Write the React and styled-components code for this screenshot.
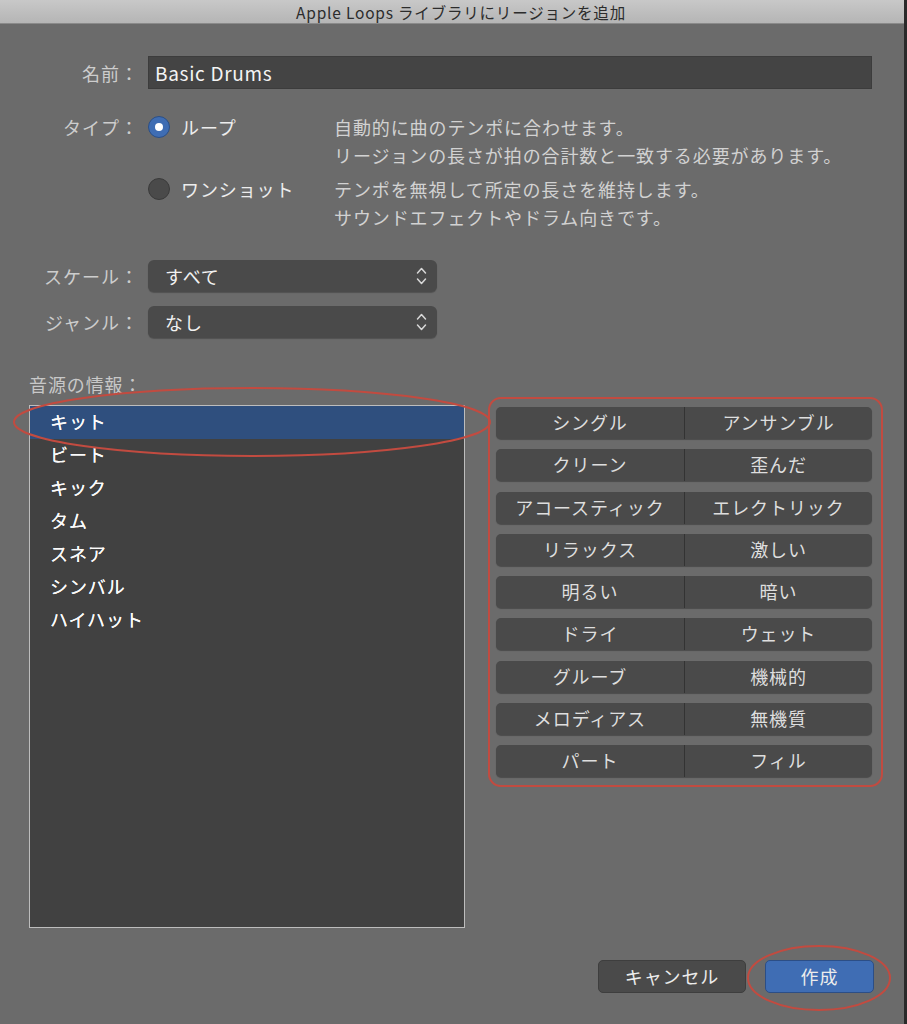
import React from 'react'
import styled, { createGlobalStyle } from 'styled-components'

const GlobalStyle = createGlobalStyle`
  html, body {
    margin: 0;
    padding: 0;
    background: #6b6b6b;
  }
  body {
    font-family: "Noto Sans CJK JP", "Noto Sans", sans-serif;
  }
`

const Window = styled.div`
  position: relative;
  width: 907px;
  height: 1024px;
  box-sizing: border-box;
  border-right: 3px solid #2a2a2a;
  background: #6b6b6b;
  display: flex;
  flex-direction: column;
  overflow: hidden;
`

const TitleBar = styled.div`
  flex: none;
  height: 23px;
  padding-left: 18px;
  background: linear-gradient(#c8c8c8, #b5b5b5);
  border-bottom: 1px solid #8a8a8a;
  display: flex;
  align-items: center;
  justify-content: center;
  font-size: 15.5px;
  letter-spacing: 0.8px;
  color: #2c2c2c;
`

const Content = styled.div`
  padding: 32px 32px 0 29px;
  display: flex;
  flex-direction: column;
  letter-spacing: 0.9px;
`

const FormRow = styled.div`
  display: grid;
  grid-template-columns: 110px 1fr;
  column-gap: 9px;
  align-items: ${p => (p.$top ? 'start' : 'center')};
  margin-top: ${p => p.$mt || 0}px;
`

const Label = styled.div`
  text-align: right;
  font-size: 18px;
  line-height: 28px;
  color: #cdcdcd;
  white-space: nowrap;
  letter-spacing: 1px;
`

const TextInput = styled.div`
  height: 33px;
  background: #444444;
  box-shadow: inset 0 0 0 1px #3c3c3c;
  display: flex;
  align-items: center;
  padding-left: 7px;
  font-size: 19px;
  letter-spacing: 0.7px;
  color: #f4f4f4;
`

const RadioGroup = styled.div`
  display: flex;
  flex-direction: column;
  gap: 6px;
`

const RadioOption = styled.div`
  display: grid;
  grid-template-columns: 22px 142px 1fr;
  column-gap: 11px;
  align-items: start;
`

const RadioDot = styled.div`
  width: 22px;
  height: 22px;
  margin-top: 3px;
  box-sizing: border-box;
  border-radius: 50%;
  background: ${p => (p.$on ? '#3f6db3' : '#4a4a4a')};
  border: 1px solid ${p => (p.$on ? '#2b4f86' : '#3a3a3a')};
  display: flex;
  align-items: center;
  justify-content: center;
  &::after {
    content: '';
    display: ${p => (p.$on ? 'block' : 'none')};
    width: 8px;
    height: 8px;
    border-radius: 50%;
    background: #ffffff;
  }
`

const OptionText = styled.div`
  font-size: 18px;
  line-height: 28px;
  color: #ededed;
  white-space: nowrap;
`

const Description = styled.div`
  font-size: 18px;
  line-height: 28px;
  color: #d2d2d2;
  white-space: nowrap;
`

const Popup = styled.div`
  width: 289px;
  height: 32px;
  box-sizing: border-box;
  border-radius: 6px;
  background: #4a4a4a;
  box-shadow: 0 1px 1px rgba(0, 0, 0, 0.25);
  display: flex;
  align-items: center;
  justify-content: space-between;
  padding: 0 10px 0 17px;
  font-size: 18px;
  color: #f2f2f2;
`

const SectionLabel = styled.div`
  margin-top: 34px;
  font-size: 18px;
  line-height: 24px;
  color: #c8c8c8;
`

const Lower = styled.div`
  margin-top: 9px;
  display: flex;
  gap: 31px;
  align-items: flex-start;
`

const List = styled.div`
  width: 437px;
  height: 523px;
  box-sizing: border-box;
  border: 1.5px solid #bdbdbd;
  background: #414141;
  display: flex;
  flex-direction: column;
`

const ListItem = styled.div`
  height: 33px;
  flex: none;
  box-sizing: border-box;
  padding: 0 0 3px 20px;
  display: flex;
  align-items: center;
  font-size: 18px;
  color: #fafafa;
  text-shadow: 0 0 0.4px #ffffff;
  background: ${p => (p.$selected ? '#2f4f7e' : 'transparent')};
`

const SegmentGrid = styled.div`
  width: 377px;
  padding-top: 2px;
  display: flex;
  flex-direction: column;
  gap: 10.25px;
`

const Segmented = styled.div`
  height: 32px;
  display: grid;
  grid-template-columns: 1fr 1fr;
  border-radius: 5px;
  background: #4a4a4a;
  box-shadow: 0 1px 1px rgba(0, 0, 0, 0.3);
  overflow: hidden;
`

const Segment = styled.div`
  display: flex;
  align-items: center;
  justify-content: center;
  padding-bottom: 2px;
  font-size: 18px;
  color: #dedede;
  & + & {
    border-left: 1px solid #333333;
  }
`

const Footer = styled.div`
  margin-top: 32px;
  display: flex;
  justify-content: flex-end;
  gap: 19px;
  margin-right: -2px;
`

const Button = styled.div`
  width: ${p => p.$w}px;
  height: 33px;
  box-sizing: border-box;
  border-radius: 5px;
  background: ${p => (p.$primary ? '#3f6db4' : '#4a4a4a')};
  border: 1px solid ${p => (p.$primary ? '#2c4e86' : '#3e3e3e')};
  display: flex;
  align-items: center;
  justify-content: center;
  padding-bottom: 2px;
  font-size: 18px;
  color: #ececec;
`

const Annotations = styled.svg`
  position: absolute;
  left: 0;
  top: 0;
  pointer-events: none;
`

const Chevrons = () => (
  <svg width="11" height="20" viewBox="0 0 11 20">
    <polyline points="1.5,7 5.5,2.5 9.5,7" fill="none" stroke="#d8d8d8" strokeWidth="1.5" strokeLinecap="round" strokeLinejoin="round" />
    <polyline points="1.5,13 5.5,17.5 9.5,13" fill="none" stroke="#d8d8d8" strokeWidth="1.5" strokeLinecap="round" strokeLinejoin="round" />
  </svg>
)

const instruments = ['キット', 'ビート', 'キック', 'タム', 'スネア', 'シンバル', 'ハイハット']

const pairs = [
  ['シングル', 'アンサンブル'],
  ['クリーン', '歪んだ'],
  ['アコースティック', 'エレクトリック'],
  ['リラックス', '激しい'],
  ['明るい', '暗い'],
  ['ドライ', 'ウェット'],
  ['グルーブ', '機械的'],
  ['メロディアス', '無機質'],
  ['パート', 'フィル'],
]

export default function App() {
  return (
    <>
      <GlobalStyle />
      <Window>
        <TitleBar>Apple Loops ライブラリにリージョンを追加</TitleBar>
        <Content>
          <FormRow>
            <Label>名前：</Label>
            <TextInput>Basic Drums</TextInput>
          </FormRow>

          <FormRow $top $mt={24}>
            <Label>タイプ：</Label>
            <RadioGroup>
              <RadioOption>
                <RadioDot $on />
                <OptionText>ループ</OptionText>
                <Description>
                  自動的に曲のテンポに合わせます。<br />
                  リージョンの長さが拍の合計数と一致する必要があります。
                </Description>
              </RadioOption>
              <RadioOption>
                <RadioDot />
                <OptionText>ワンショット</OptionText>
                <Description>
                  テンポを無視して所定の長さを維持します。<br />
                  サウンドエフェクトやドラム向きです。
                </Description>
              </RadioOption>
            </RadioGroup>
          </FormRow>

          <FormRow $mt={29}>
            <Label>スケール：</Label>
            <Popup>
              すべて
              <Chevrons />
            </Popup>
          </FormRow>
          <FormRow $mt={14}>
            <Label>ジャンル：</Label>
            <Popup>
              なし
              <Chevrons />
            </Popup>
          </FormRow>

          <SectionLabel>音源の情報：</SectionLabel>
          <Lower>
            <List>
              {instruments.map((name, i) => (
                <ListItem key={name} $selected={i === 0}>{name}</ListItem>
              ))}
            </List>
            <SegmentGrid>
              {pairs.map(([a, b]) => (
                <Segmented key={a}>
                  <Segment>{a}</Segment>
                  <Segment>{b}</Segment>
                </Segmented>
              ))}
            </SegmentGrid>
          </Lower>

          <Footer>
            <Button $w={148}>キャンセル</Button>
            <Button $w={109} $primary>作成</Button>
          </Footer>
        </Content>

        <Annotations width="907" height="1024" viewBox="0 0 907 1024">
          <ellipse cx="252" cy="422" rx="238" ry="34" fill="none" stroke="#c24b40" strokeWidth="2" />
          <rect x="489" y="398" width="393" height="388" rx="12" fill="none" stroke="#c24b40" strokeWidth="2" />
          <ellipse cx="819" cy="978" rx="71" ry="32" fill="none" stroke="#c24b40" strokeWidth="2" />
        </Annotations>
      </Window>
    </>
  )
}
